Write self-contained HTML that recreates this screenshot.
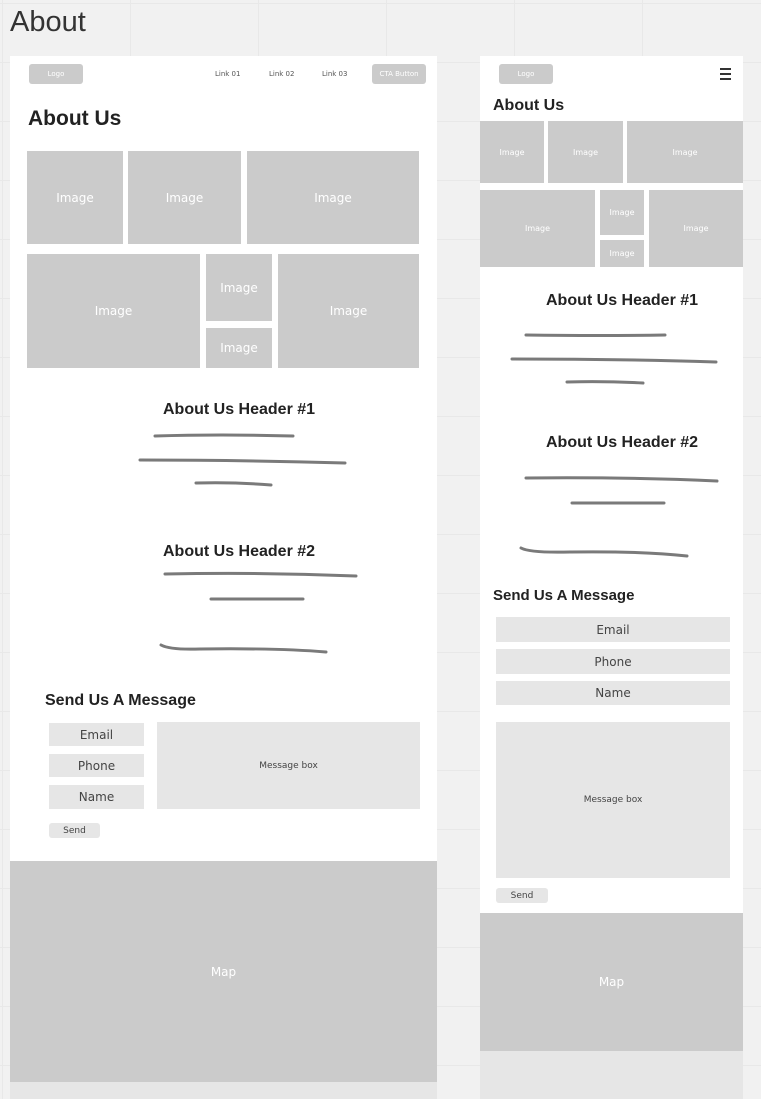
<!DOCTYPE html>
<html><head><meta charset="utf-8"><style>
*{margin:0;padding:0;box-sizing:border-box}
body{width:761px;height:1099px;position:relative;overflow:hidden;background:#f1f1f1;font-family:"DejaVu Sans","Liberation Sans",sans-serif;
background-image:linear-gradient(#e8e8e8 1px,transparent 1px),linear-gradient(90deg,#e8e8e8 1px,transparent 1px);background-size:128px 59px;background-position:2px 3px}
.a{position:absolute}
.w{background:#fff}
.img{position:absolute;background:#cbcbcb;color:#fff;display:flex;align-items:center;justify-content:center;font-size:12px}
.s .img{font-size:8px}
.btn{position:absolute;background:#cbcbcb;color:#fff;border-radius:3px;font-size:7px;display:flex;align-items:center;justify-content:center}
.in{position:absolute;background:#e6e6e6;color:#444;display:flex;align-items:center;justify-content:center;font-size:12px}
.h{position:absolute;font-weight:bold;color:#222;white-space:nowrap;font-family:"Liberation Sans",sans-serif}
.lk{position:absolute;font-size:7px;color:#555}
</style></head><body>
<div class="a" style="left:10px;top:6px;font-size:29px;color:#333;font-family:'Liberation Sans',sans-serif">About</div>

<!-- left panel -->
<div class="a w" style="left:10px;top:56px;width:427px;height:805px"></div>
<div class="btn" style="left:29px;top:64px;width:54px;height:20px">Logo</div>
<div class="lk" style="left:215px;top:70px">Link 01</div>
<div class="lk" style="left:269px;top:70px">Link 02</div>
<div class="lk" style="left:322px;top:70px">Link 03</div>
<div class="btn" style="left:372px;top:64px;width:54px;height:20px">CTA Button</div>
<div class="h" style="left:28px;top:107px;font-size:21px">About Us</div>
<div class="img" style="left:27px;top:151px;width:96px;height:93px">Image</div>
<div class="img" style="left:128px;top:151px;width:113px;height:93px">Image</div>
<div class="img" style="left:247px;top:151px;width:172px;height:93px">Image</div>
<div class="img" style="left:27px;top:254px;width:173px;height:114px">Image</div>
<div class="img" style="left:206px;top:254px;width:66px;height:67px">Image</div>
<div class="img" style="left:206px;top:328px;width:66px;height:40px">Image</div>
<div class="img" style="left:278px;top:254px;width:141px;height:114px">Image</div>
<div class="h" style="left:163px;top:401px;font-size:16px">About Us Header #1</div>
<div class="h" style="left:163px;top:543px;font-size:16px">About Us Header #2</div>
<div class="h" style="left:45px;top:692px;font-size:16px">Send Us A Message</div>
<div class="in" style="left:49px;top:723px;width:95px;height:23px">Email</div>
<div class="in" style="left:49px;top:754px;width:95px;height:23px">Phone</div>
<div class="in" style="left:49px;top:785px;width:95px;height:24px">Name</div>
<div class="in" style="left:157px;top:722px;width:263px;height:87px;font-size:9px">Message box</div>
<div class="in" style="left:49px;top:823px;width:51px;height:15px;font-size:9px;border-radius:3px">Send</div>
<div class="img" style="left:10px;top:861px;width:427px;height:221px">Map</div>
<div class="a" style="left:10px;top:1082px;width:427px;height:17px;background:#e6e6e6"></div>

<!-- right panel -->
<div class="s">
<div class="a w" style="left:480px;top:56px;width:263px;height:857px"></div>
<div class="btn" style="left:499px;top:64px;width:54px;height:20px">Logo</div>
<div class="a" style="left:720px;top:68px;width:11px;height:2px;background:#333"></div>
<div class="a" style="left:720px;top:73px;width:11px;height:2px;background:#333"></div>
<div class="a" style="left:720px;top:78px;width:11px;height:2px;background:#333"></div>
<div class="h" style="left:493px;top:97px;font-size:16px">About Us</div>
<div class="img" style="left:480px;top:121px;width:64px;height:62px">Image</div>
<div class="img" style="left:548px;top:121px;width:75px;height:62px">Image</div>
<div class="img" style="left:627px;top:121px;width:116px;height:62px">Image</div>
<div class="img" style="left:480px;top:190px;width:115px;height:77px">Image</div>
<div class="img" style="left:600px;top:190px;width:44px;height:45px">Image</div>
<div class="img" style="left:600px;top:240px;width:44px;height:27px">Image</div>
<div class="img" style="left:649px;top:190px;width:94px;height:77px">Image</div>
<div class="h" style="left:546px;top:292px;font-size:16px">About Us Header #1</div>
<div class="h" style="left:546px;top:434px;font-size:16px">About Us Header #2</div>
<div class="h" style="left:493px;top:587px;font-size:15px">Send Us A Message</div>
<div class="in" style="left:496px;top:617px;width:234px;height:25px">Email</div>
<div class="in" style="left:496px;top:649px;width:234px;height:25px">Phone</div>
<div class="in" style="left:496px;top:681px;width:234px;height:24px">Name</div>
<div class="in" style="left:496px;top:722px;width:234px;height:156px;font-size:9px">Message box</div>
<div class="in" style="left:496px;top:888px;width:52px;height:15px;font-size:9px;border-radius:3px">Send</div>
<div class="img" style="left:480px;top:913px;width:263px;height:138px;font-size:12px">Map</div>
<div class="a" style="left:480px;top:1051px;width:263px;height:48px;background:#e6e6e6"></div>
</div>

<svg class="a" style="left:0;top:0" width="761" height="1099" fill="none" stroke="#7a7a7a" stroke-width="3" stroke-linecap="round">
<path d="M155 436 Q220 434 293 436"/>
<path d="M140 460 Q240 460 345 463"/>
<path d="M196 483 Q235 482 271 485"/>
<path d="M165 574 Q260 572 356 576"/>
<path d="M211 599 L303 599"/>
<path d="M161 645 Q170 650 200 649 Q280 648 326 652"/>
<path d="M526 335 Q600 336 665 335"/>
<path d="M512 359 Q620 359 716 362"/>
<path d="M567 382 Q605 381 643 383"/>
<path d="M526 478 Q630 477 717 481"/>
<path d="M572 503 L664 503"/>
<path d="M521 548 Q530 553 570 552 Q640 551 687 556"/>
</svg>
</body></html>
